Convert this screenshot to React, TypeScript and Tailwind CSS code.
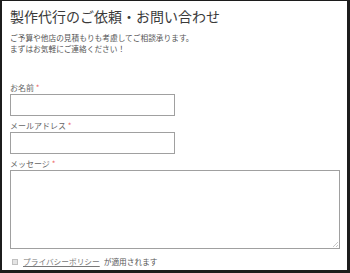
const JP = { fontFamily: '"Noto Sans CJK JP", "Noto Sans", sans-serif' };

function Label({ children }: { children: React.ReactNode }) {
  return (
    <div className="h-[12px] text-[8px] leading-[12px] text-[#666]">
      {children} <span className="text-[#e66]">*</span>
    </div>
  );
}

export default function App() {
  return (
    <div
      className="flex h-[273px] w-[350px] flex-col border-t border-r-[3px] border-b-[3px] border-l-2 border-[#1c1c1c] bg-white pl-[8px]"
      style={JP}
    >
      <h1 className="mt-[5px] h-[20px] text-[14px] leading-[20px] font-normal text-[#3a3a3a]">
        製作代行のご依頼・お問い合わせ
      </h1>
      <p className="mt-[6px] text-[7.7px] leading-[11px] text-[#555]">
        ご予算や他店の見積もりも考慮してご相談承ります。
        <br />
        まずはお気軽にご連絡ください！
      </p>

      <div className="mt-[28px] flex flex-col">
        <Label>お名前</Label>
        <input className="h-[22px] w-[165px] border border-[#a0a0a0] outline-none" />
        <div className="mt-[4px]">
          <Label>メールアドレス</Label>
        </div>
        <input className="h-[22px] w-[165px] border border-[#a0a0a0] outline-none" />
        <div className="mt-[4px]">
          <Label>メッセージ</Label>
        </div>
        <div className="relative h-[79px] w-[330px]">
          <textarea className="h-full w-full resize-none border border-[#a0a0a0] outline-none" />
          {/* faint resize grip */}
          <svg className="absolute right-[2px] bottom-[2px]" width="6" height="6" viewBox="0 0 6 6">
            <path d="M6 1 L1 6 M6 4 L4 6" stroke="#c8c8c8" strokeWidth="1" />
          </svg>
        </div>
      </div>

      <div className="mt-[7px] flex items-center text-[7.7px] leading-[12px] text-[#555]">
        <span className="ml-[2px] mr-[5px] inline-block h-[6px] w-[6px] border border-[#c0c0c0] bg-[#e4e4e4]" />
        <a className="text-[#777] underline">プライバシーポリシー</a>
        <span className="ml-[4px]">が適用されます</span>
      </div>
    </div>
  );
}
